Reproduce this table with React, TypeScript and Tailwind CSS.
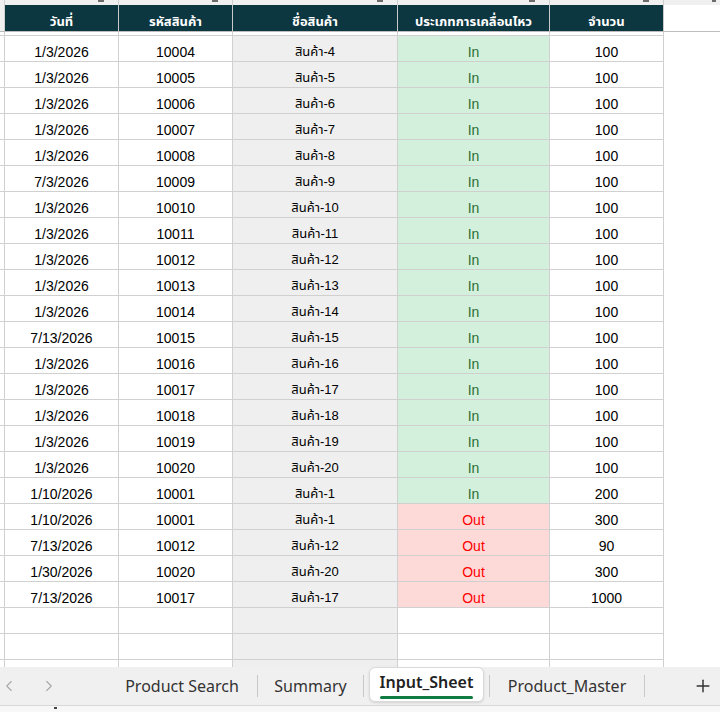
import { ChevronLeft, ChevronRight, Plus } from "lucide-react";

type Row = {
  date: string;
  code: string;
  name: string;
  kind: "In" | "Out";
  qty: number;
};

const rows: Row[] = [
  { date: "1/3/2026", code: "10004", name: "สินค้า-4", kind: "In", qty: 100 },
  { date: "1/3/2026", code: "10005", name: "สินค้า-5", kind: "In", qty: 100 },
  { date: "1/3/2026", code: "10006", name: "สินค้า-6", kind: "In", qty: 100 },
  { date: "1/3/2026", code: "10007", name: "สินค้า-7", kind: "In", qty: 100 },
  { date: "1/3/2026", code: "10008", name: "สินค้า-8", kind: "In", qty: 100 },
  { date: "7/3/2026", code: "10009", name: "สินค้า-9", kind: "In", qty: 100 },
  { date: "1/3/2026", code: "10010", name: "สินค้า-10", kind: "In", qty: 100 },
  { date: "1/3/2026", code: "10011", name: "สินค้า-11", kind: "In", qty: 100 },
  { date: "1/3/2026", code: "10012", name: "สินค้า-12", kind: "In", qty: 100 },
  { date: "1/3/2026", code: "10013", name: "สินค้า-13", kind: "In", qty: 100 },
  { date: "1/3/2026", code: "10014", name: "สินค้า-14", kind: "In", qty: 100 },
  { date: "7/13/2026", code: "10015", name: "สินค้า-15", kind: "In", qty: 100 },
  { date: "1/3/2026", code: "10016", name: "สินค้า-16", kind: "In", qty: 100 },
  { date: "1/3/2026", code: "10017", name: "สินค้า-17", kind: "In", qty: 100 },
  { date: "1/3/2026", code: "10018", name: "สินค้า-18", kind: "In", qty: 100 },
  { date: "1/3/2026", code: "10019", name: "สินค้า-19", kind: "In", qty: 100 },
  { date: "1/3/2026", code: "10020", name: "สินค้า-20", kind: "In", qty: 100 },
  { date: "1/10/2026", code: "10001", name: "สินค้า-1", kind: "In", qty: 200 },
  { date: "1/10/2026", code: "10001", name: "สินค้า-1", kind: "Out", qty: 300 },
  { date: "7/13/2026", code: "10012", name: "สินค้า-12", kind: "Out", qty: 90 },
  { date: "1/30/2026", code: "10020", name: "สินค้า-20", kind: "Out", qty: 300 },
  { date: "7/13/2026", code: "10017", name: "สินค้า-17", kind: "Out", qty: 1000 },
];

const font = "font-['Liberation_Sans','Noto_Sans_Thai','Tahoma',sans-serif]";
const cell =
  "flex shrink-0 items-end justify-center border-r border-b border-[#d0d0d0] pb-[1px] leading-4";

const headers = ["วันที่", "รหัสสินค้า", "ชื่อสินค้า", "ประเภทการเคลื่อนไหว", "จำนวน"];
const widths = ["w-[114px]", "w-[114px]", "w-[165px]", "w-[152px]", "w-[114px]"];

const App = () => {
  return (
    <div className={`flex h-[712px] w-[720px] flex-col overflow-hidden bg-white ${font}`}>
      <div className="flex-1 overflow-hidden">
        {/* sliver of the row above the header */}
        <div className="flex h-[5px] bg-[#f0f0f0]">
          <div className="w-[5px] shrink-0 border-r border-[#d0d0d0]" />
          {widths.map((w, i) => (
            <div key={i} className={`${w} relative shrink-0 border-r border-[#d0d0d0]`}>
              <span className="absolute right-[14px] top-0 h-[2px] w-[6px] bg-[#6b6b6b]" />
            </div>
          ))}
          <div className="relative flex-1">
            <span className="absolute right-[4px] top-0 h-[2px] w-[4px] bg-[#6b6b6b]" />
          </div>
        </div>

        {/* header */}
        <div className="flex h-[27px] border-b border-[#bdbdbd]">
          <div className="w-[5px] shrink-0 border-r border-[#d0d0d0] bg-[#f0f0f0]" />
          {headers.map((h, i) => (
            <div
              key={h}
              className={`${widths[i]} flex shrink-0 items-end justify-center border-r border-[#c9c9c9] bg-[#0c3640] pb-[1px] text-[13px] font-bold leading-4 text-white`}
            >
              {h}
            </div>
          ))}
          <div className="flex-1" />
        </div>

        {/* double line gap */}
        <div className="flex h-[4px]">
          <div className="w-[5px] shrink-0 border-r border-b border-[#d0d0d0]" />
          {widths.map((w, i) => (
            <div key={i} className={`${w} shrink-0 border-r border-b border-[#d0d0d0]`} />
          ))}
          <div className="flex-1" />
        </div>

        {rows.map((r, i) => (
          <div key={i} className="flex h-[26px] text-[14px] text-black">
            <div className={`${cell} w-[5px]`} />
            <div className={`${cell} w-[114px]`}>{r.date}</div>
            <div className={`${cell} w-[114px]`}>{r.code}</div>
            <div className={`${cell} w-[165px] bg-[#efefef] text-[13px]`}>{r.name}</div>
            <div
              className={`${cell} w-[152px] ${
                r.kind === "In" ? "bg-[#d3f0dc] text-[#2b6e33]" : "bg-[#fdd9d8] text-[#ff0000]"
              }`}
            >
              {r.kind}
            </div>
            <div className={`${cell} w-[114px]`}>{r.qty}</div>
            <div className="flex-1" />
          </div>
        ))}

        {[0, 1, 2].map((i) => (
          <div key={i} className="flex h-[26px]">
            <div className={`${cell} w-[5px]`} />
            <div className={`${cell} w-[114px]`} />
            <div className={`${cell} w-[114px]`} />
            <div className={`${cell} w-[165px] bg-[#efefef]`} />
            <div className={`${cell} w-[152px]`} />
            <div className={`${cell} w-[114px]`} />
            <div className="flex-1" />
          </div>
        ))}
      </div>

      {/* sheet tabs */}
      <div className="flex h-[38px] shrink-0 items-center bg-[#f0f0f0] font-['Noto_Sans',sans-serif] text-[16px] text-[#333]">
        <div className="flex w-[107px] shrink-0 items-center gap-[22px] text-[#a8a8a8]">
          <ChevronLeft size={18} strokeWidth={1.5} />
          <ChevronRight size={18} strokeWidth={1.5} />
        </div>
        <div className="w-[150px] shrink-0 text-center">Product Search</div>
        <div className="h-[22px] w-px shrink-0 bg-[#c8c8c8]" />
        <div className="w-[105px] shrink-0 text-center">Summary</div>
        <div className="h-[22px] w-px shrink-0 bg-[#c8c8c8]" />
        <div className="w-[5px] shrink-0" />
        <div className="flex h-[35px] w-[115px] shrink-0 flex-col items-center self-start rounded-md border border-[#dadada] bg-white pt-[4px] shadow-sm">
          <div className="flex flex-col items-stretch">
            <span className="font-semibold leading-5 text-[#222]">Input_Sheet</span>
            <span className="mt-[4px] h-[3px] rounded-full bg-[#107c41]" />
          </div>
        </div>
        <div className="w-[5px] shrink-0" />
        <div className="h-[22px] w-px shrink-0 bg-[#c8c8c8]" />
        <div className="w-[154px] shrink-0 text-center">Product_Master</div>
        <div className="h-[22px] w-px shrink-0 bg-[#c8c8c8]" />
        <div className="flex flex-1 justify-end pr-[7px] text-[#333]">
          <Plus size={20} strokeWidth={1.75} />
        </div>
      </div>
      <div className="relative h-[7px] shrink-0 border-t border-[#d8d8d8] bg-[#f7f7f7]">
        <span className="absolute left-[54px] top-[1px] h-[2px] w-[3px] bg-[#444]" />
      </div>
    </div>
  );
};

export default App;
